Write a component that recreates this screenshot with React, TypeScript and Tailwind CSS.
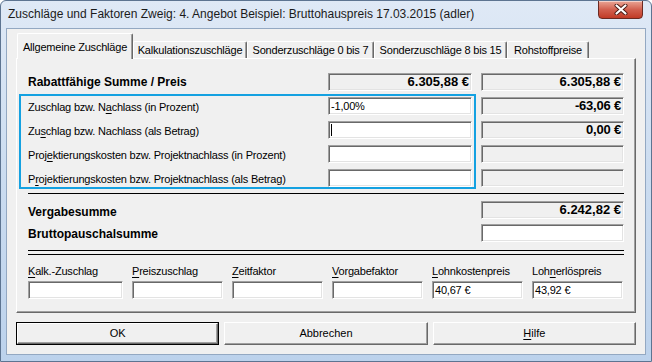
const sunken =
  "border border-t-[#a0a0a0] border-l-[#a0a0a0] border-r-white border-b-white shadow-[inset_1px_1px_0_#696969,inset_-1px_-1px_0_#e3e3e3]";
const raised =
  "border border-t-white border-l-white border-r-[#696969] border-b-[#696969] shadow-[inset_-1px_-1px_0_#a0a0a0]";

function Field({
  value,
  white,
  bold,
  cursor,
  className = "",
}: {
  value?: string;
  white?: boolean;
  bold?: boolean;
  cursor?: boolean;
  className?: string;
}) {
  return (
    <div
      className={`${sunken} h-[18px] flex items-center ${white ? "bg-white" : "bg-[#f0f0f0]"} ${
        bold ? "justify-end pr-[2px] text-[13px] font-bold" : "pl-[2px] text-[11px] tracking-[-0.2px]"
      } ${className}`}
    >
      {value}
      {cursor && <span className="w-px h-[12px] bg-black" />}
    </div>
  );
}

function Mn({ pre, key1, post }: { pre: string; key1: string; post: string }) {
  return (
    <>
      {pre}
      <span className="underline underline-offset-[2px]">{key1}</span>
      {post}
    </>
  );
}

const tabs = [
  { label: "Kalkulationszuschläge", w: "w-[114px]" },
  { label: "Sonderzuschläge 0 bis 7", w: "w-[127px]" },
  { label: "Sonderzuschläge 8 bis 15", w: "w-[133px]" },
  { label: "Rohstoffpreise", w: "w-[82px]" },
];

const bottomFields = [
  { pre: "", k: "K", post: "alk.-Zuschlag", value: "" },
  { pre: "", k: "P", post: "reiszuschlag", value: "" },
  { pre: "", k: "Z", post: "eitfaktor", value: "" },
  { pre: "", k: "V", post: "orgabefaktor", value: "" },
  { pre: "", k: "L", post: "ohnkostenpreis", value: "40,67 €" },
  { pre: "Loh", k: "n", post: "erlöspreis", value: "43,92 €" },
];

export default function App() {
  return (
    <div className="w-[652px] h-[362px] flex flex-col overflow-hidden rounded-t-[6px] border border-[#5d7491] bg-linear-to-b from-[#dfe9f6] via-[#cbdcf0] to-[#bcd2ec] font-['Liberation_Sans',Arial,sans-serif] text-black">
      {/* title bar */}
      <div className="h-[27px] flex shrink-0">
        <div className="flex-1 pl-[7px] pt-[6px] text-[12px] leading-[14px] text-[#1b1b1b]">
          Zuschläge und Faktoren Zweig: 4. Angebot Beispiel: Bruttohauspreis 17.03.2015 (adler)
        </div>
        <div className="mr-[8px] -mt-px w-[45px] h-[19px] rounded-b-[4px] border border-[#6b2a22] bg-linear-to-b from-[#e9a596] via-[#d2604f] to-[#c13a25] flex items-center justify-center shadow-[inset_0_1px_0_rgba(255,255,255,0.5)]">
          <svg width="14" height="11" viewBox="0 0 14 11">
            <path d="M2.5 1.5 L11.5 9.5 M11.5 1.5 L2.5 9.5" stroke="#4a1a14" strokeWidth="4" strokeLinecap="round" />
            <path d="M2.5 1.5 L11.5 9.5 M11.5 1.5 L2.5 9.5" stroke="#ffffff" strokeWidth="2.2" strokeLinecap="round" />
          </svg>
        </div>
      </div>

      {/* client area */}
      <div className="mx-[5px] h-[327px] border border-[#93a8c2] bg-[#f0f0f0] pt-[4px] px-[9px] text-[11px]">
        {/* tabs */}
        <div className="relative z-10 h-[26px] -mb-px flex items-start">
          <div className="ml-px w-[116px] h-[26px] border-l border-t border-white border-r border-r-[#696969] shadow-[inset_-1px_0_0_#a0a0a0] rounded-t-[2px] bg-[#f0f0f0] pt-[7px] leading-[13px] text-center tracking-[-0.2px]">
            Allgemeine Zuschläge
          </div>
          {tabs.map((t) => (
            <div
              key={t.label}
              className={`${t.w} mt-[8px] h-[17px] border-l border-t border-white border-r border-r-[#696969] shadow-[inset_-1px_0_0_#a0a0a0] rounded-t-[2px] pt-px leading-[14px] text-center tracking-[-0.2px]`}
            >
              {t.label}
            </div>
          ))}
        </div>

        {/* panel */}
        <div className={`${raised} h-[255px] pl-[11px] pt-[14px]`}>
          <div className="h-[18px] flex items-center">
            <div className="w-[300px] text-[12px] font-bold">Rabattfähige Summe / Preis</div>
            <Field value="6.305,88 €" bold className="w-[144px]" />
            <Field value="6.305,88 €" bold className="ml-[9px] w-[143px]" />
          </div>

          <div className="relative mt-[6px] flex flex-col gap-[6px] tracking-[-0.2px]">
            <div className="absolute -top-[3px] -left-[9px] w-[457px] h-[95px] border-2 border-[#14a1e1] pointer-events-none" />
            <div className="h-[18px] flex items-center">
              <div className="w-[300px] pt-[2px]">
                <Mn pre="Zuschlag bzw. N" key1="a" post="chlass (in Prozent)" />
              </div>
              <Field value="-1,00%" white className="w-[144px]" />
              <Field value="-63,06 €" bold className="ml-[9px] w-[143px]" />
            </div>
            <div className="h-[18px] flex items-center">
              <div className="w-[300px] pt-[2px]">
                <Mn pre="Zu" key1="s" post="chlag bzw. Nachlass (als Betrag)" />
              </div>
              <Field white cursor className="w-[144px]" />
              <Field value="0,00 €" bold className="ml-[9px] w-[143px]" />
            </div>
            <div className="h-[18px] flex items-center">
              <div className="w-[300px] pt-[2px]">
                <Mn pre="Proj" key1="e" post="ktierungskosten bzw. Projektnachlass (in Prozent)" />
              </div>
              <Field white className="w-[144px]" />
              <Field className="ml-[9px] w-[143px]" />
            </div>
            <div className="h-[18px] flex items-center">
              <div className="w-[300px] pt-[2px]">
                <Mn pre="P" key1="r" post="ojektierungskosten bzw. Projektnachlass (als Betrag)" />
              </div>
              <Field white className="w-[144px]" />
              <Field className="ml-[9px] w-[143px]" />
            </div>
          </div>

          <div className="mt-[6px] h-px w-[596px] bg-black" />

          <div className="mt-[7px] w-[596px] h-[18px] flex items-center">
            <div className="flex-1 pt-[3px] text-[12px] font-bold">Vergabesumme</div>
            <Field value="6.242,82 €" bold className="w-[143px]" />
          </div>
          <div className="mt-[5px] w-[596px] h-[18px] flex items-center">
            <div className="flex-1 pt-[2px] text-[12px] font-bold">Bruttopauschalsumme</div>
            <Field white className="w-[143px]" />
          </div>

          <div className="mt-[8px] h-px w-[596px] bg-black" />
          <div className="mt-[3px] h-px w-[596px] bg-black" />

          <div className="mt-[9px] grid grid-cols-[95px_repeat(5,91px)] gap-x-[9px]">
            {bottomFields.map((f) => (
              <div key={f.post} className="flex flex-col">
                <div className="h-[14px] leading-[14px] tracking-[-0.2px] whitespace-nowrap">
                  <Mn pre={f.pre} key1={f.k} post={f.post} />
                </div>
                <Field value={f.value} white className="mt-[3px]" />
              </div>
            ))}
          </div>
        </div>

        {/* buttons */}
        <div className="mt-[9px] grid grid-cols-3 gap-[5px]">
          <div className="h-[23px] border border-black">
            <div className={`${raised} h-full flex items-center justify-center`}>OK</div>
          </div>
          <div className={`${raised} h-[23px] flex items-center justify-center`}>Abbrechen</div>
          <div className={`${raised} h-[23px] flex items-center justify-center`}>
            <Mn pre="" key1="H" post="ilfe" />
          </div>
        </div>
      </div>
    </div>
  );
}
